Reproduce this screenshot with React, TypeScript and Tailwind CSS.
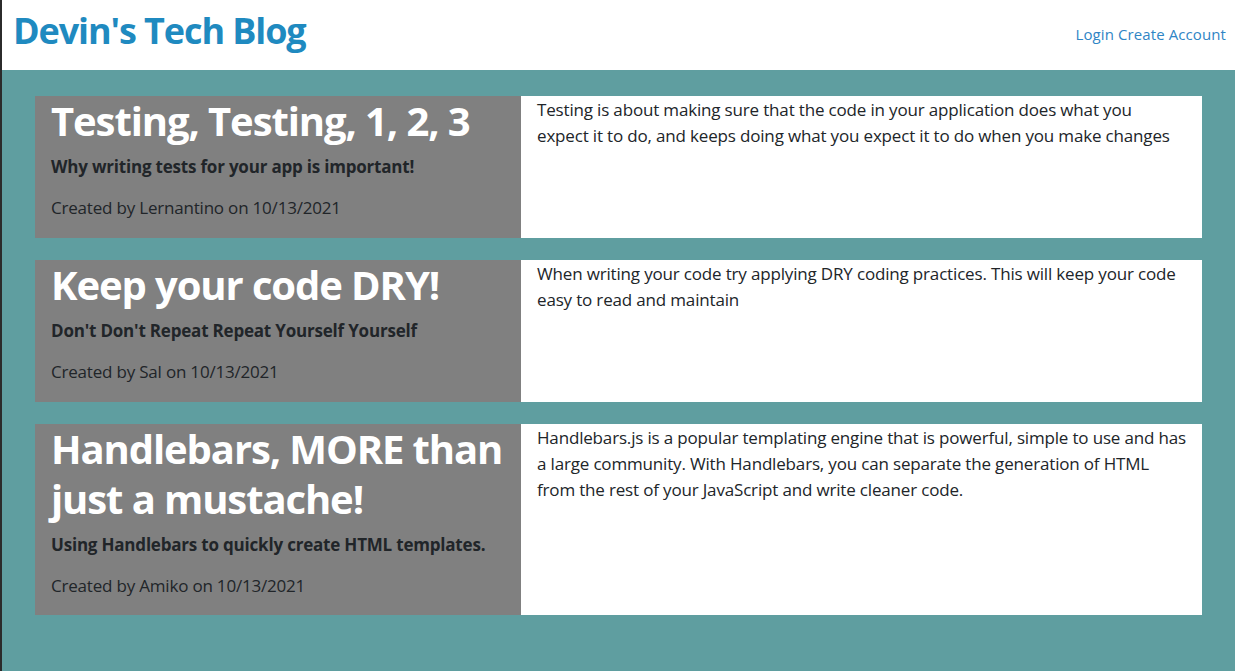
import React from "react";

const posts = [
  {
    title: "Testing, Testing, 1, 2, 3",
    sub: "Why writing tests for your app is important!",
    author: "Lernantino",
    body: "Testing is about making sure that the code in your application does what you expect it to do, and keeps doing what you expect it to do when you make changes",
  },
  {
    title: "Keep your code DRY!",
    sub: "Don't Don't Repeat Repeat Yourself Yourself",
    author: "Sal",
    body: "When writing your code try applying DRY coding practices. This will keep your code easy to read and maintain",
  },
  {
    title: "Handlebars, MORE than just a mustache!",
    sub: "Using Handlebars to quickly create HTML templates.",
    author: "Amiko",
    body: "Handlebars.js is a popular templating engine that is powerful, simple to use and has a large community. With Handlebars, you can separate the generation of HTML from the rest of your JavaScript and write cleaner code.",
  },
];

export default function App() {
  return (
    <div
      className="min-h-[671px] flex flex-col border-l-2 border-[#2b2b2b] text-[#212529]"
      style={{ fontFamily: '"Open Sans", "Noto Sans", sans-serif' }}
    >
      <header className="h-[70px] bg-white flex items-center justify-between pl-[11px] pr-[9px]">
        <h1 className="text-[36px] font-bold text-[#1f8ac0] leading-none -mt-[8px] tracking-[-1.1px]">
          Devin's Tech Blog
        </h1>
        <nav className="text-[15px] text-[#2f85c5] flex gap-[4px] tracking-[0.1px] -mt-[2px]">
          <a>Login</a>
          <a>Create Account</a>
        </nav>
      </header>
      <main className="flex-1 bg-[#5f9ea0] px-[33px] pt-[26px] pb-[55px] flex flex-col gap-[22px]">
        {posts.map((p) => (
          <div key={p.title} className="flex min-h-[142px]">
            <div className="w-[486px] shrink-0 bg-[#808080] px-[16px]">
              <h2 className="text-[40px] leading-[50px] font-bold text-white mb-[8px] tracking-[-1.1px]">
                {p.title}
              </h2>
              <p className="text-[17px] leading-[26px] font-bold mb-[15px] tracking-[-0.2px]">{p.sub}</p>
              <p className="text-[17px] leading-[26px] mb-[16px] tracking-[-0.2px]">
                Created by {p.author} on 10/13/2021
              </p>
            </div>
            <div className="flex-1 bg-white px-[16px] pt-[1px]">
              <p className="text-[17px] leading-[26px] tracking-[-0.17px]">{p.body}</p>
            </div>
          </div>
        ))}
      </main>
    </div>
  );
}
